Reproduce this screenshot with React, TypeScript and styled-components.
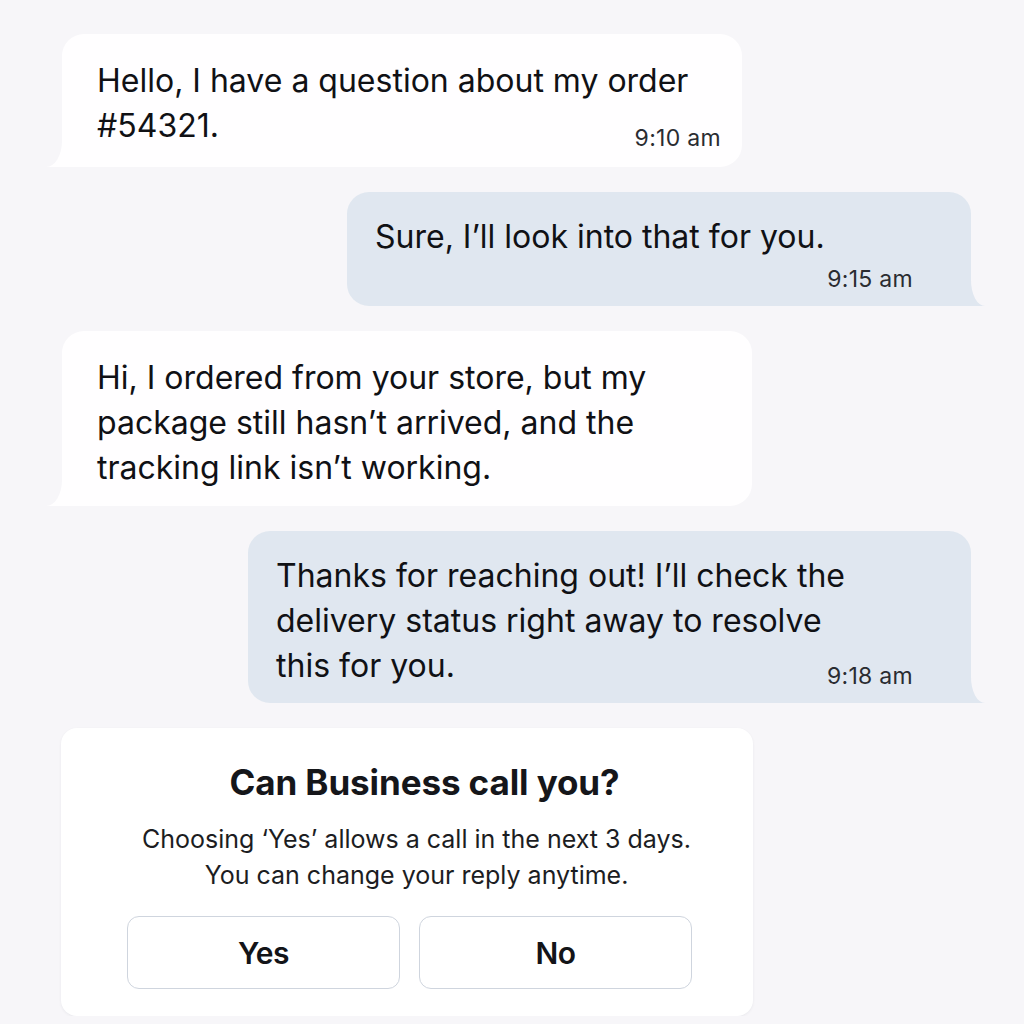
import React from "react";
import styled, { createGlobalStyle, css } from "styled-components";

const PAGE_BG = "#f7f6f9";
const IN_BG = "#fffeff";
const OUT_BG = "#e0e7f0";

const GlobalStyle = createGlobalStyle`
	html, body {
		margin: 0;
		padding: 0;
		background: ${PAGE_BG};
	}
	body {
		font-family: Inter, "Noto Sans", "Liberation Sans", sans-serif;
		color: #101115;
	}
`;

const Thread = styled.div`
	display: flex;
	flex-direction: column;
	gap: 25px;
	padding: 34px 53px 0 62px;
`;

const Bubble = styled.div<{ $out?: boolean; $width: number }>`
	position: relative;
	width: ${(p) => p.$width}px;
	box-sizing: border-box;
	border-radius: 22px;
	font-size: 32px;
	line-height: 45px;
	${(p) =>
		p.$out
			? css`
					align-self: flex-end;
					background: ${OUT_BG};
					padding: 22px 58px 14px 28px;
					border-bottom-right-radius: 0;
				`
			: css`
					align-self: flex-start;
					background: ${IN_BG};
					padding: 24px 21px 16px 35px;
					border-bottom-left-radius: 0;
				`}

	&::before,
	&::after {
		content: "";
		position: absolute;
		bottom: 0;
		width: 16px;
		height: 26px;
	}
	&::before {
		background: ${(p) => (p.$out ? OUT_BG : IN_BG)};
		${(p) => (p.$out ? "right: -14px;" : "left: -16px;")}
	}
	&::after {
		background: ${PAGE_BG};
		${(p) =>
			p.$out
				? css`
						right: -14px;
						width: 14px;
						border-bottom-left-radius: 14px 26px;
					`
				: css`
						left: -16px;
						border-bottom-right-radius: 16px 26px;
					`}
	}
`;

const Text = styled.div`
	display: flow-root;
`;

const Line = styled.span`
	display: block;
	width: fit-content;
	white-space: nowrap;
`;

// time sits at the right, beside the last line or under it
const Time = styled.span<{ $drop: number }>`
	float: right;
	margin-top: ${(p) => p.$drop}px;
	font-size: 23px;
	line-height: 26px;
	letter-spacing: 0.3px;
	white-space: nowrap;
	color: #2a2c31;
`;

const Card = styled.div`
	width: 692px;
	box-sizing: border-box;
	margin-left: -1px;
	background: #ffffff;
	border-radius: 16px;
	box-shadow: 0 1px 3px rgba(20, 30, 50, 0.06);
	padding: 33px 61px 27px 66px;
	display: flex;
	flex-direction: column;
	align-items: center;
`;

const Title = styled.h2`
	margin: 0 0 0 30px;
	font-size: 35px;
	line-height: 42px;
	font-weight: 700;
	letter-spacing: -0.1px;
	color: #15161a;
`;

const Note = styled.p`
	margin: 18px 0 0 14px;
	font-size: 25px;
	line-height: 36px;
	text-align: center;
	color: #1c1d22;
`;

const Actions = styled.div`
	margin-top: 23px;
	display: grid;
	grid-template-columns: 273px 273px;
	gap: 19px;
`;

const Choice = styled.button`
	height: 73px;
	background: #ffffff;
	border: 1.5px solid #cfd5de;
	border-radius: 12px;
	font-family: inherit;
	font-size: 30px;
	font-weight: 600;
	letter-spacing: -0.5px;
	color: #131418;
	cursor: pointer;
`;

type MessageProps = {
	lines: string[];
	width: number;
	out?: boolean;
	time?: string;
	drop?: number;
	below?: boolean;
};

const Message = ({ lines, width, out, time, drop = 20, below }: MessageProps) => {
	const stamp = time ? <Time $drop={drop}>{time}</Time> : null;
	const head = below ? lines : lines.slice(0, -1);
	const last = below ? null : lines[lines.length - 1];
	return (
		<Bubble $out={out} $width={width}>
			<Text>
				{head.map((l) => (
					<Line key={l}>{l}</Line>
				))}
				{stamp}
				{last && <Line>{last}</Line>}
			</Text>
		</Bubble>
	);
};

const App = () => {
	return (
		<>
			<GlobalStyle />
			<Thread>
				<Message
					width={680}
					lines={["Hello, I have a question about my order", "#54321."]}
					time="9:10 am"
					drop={22}
				/>
				<Message
					out
					width={624}
					lines={["Sure, I’ll look into that for you."]}
					time="9:15 am"
					drop={7}
					below
				/>
				<Message
					width={690}
					lines={[
						"Hi, I ordered from your store, but my",
						"package still hasn’t arrived, and the",
						"tracking link isn’t working.",
					]}
				/>
				<Message
					out
					width={723}
					lines={[
						"Thanks for reaching out! I’ll check the",
						"delivery status right away to resolve",
						"this for you.",
					]}
					time="9:18 am"
					drop={20}
				/>
				<Card>
					<Title>Can Business call you?</Title>
					<Note>
						Choosing ‘Yes’ allows a call in the next 3 days.
						<br />
						You can change your reply anytime.
					</Note>
					<Actions>
						<Choice>Yes</Choice>
						<Choice>No</Choice>
					</Actions>
				</Card>
			</Thread>
		</>
	);
};

export default App;
